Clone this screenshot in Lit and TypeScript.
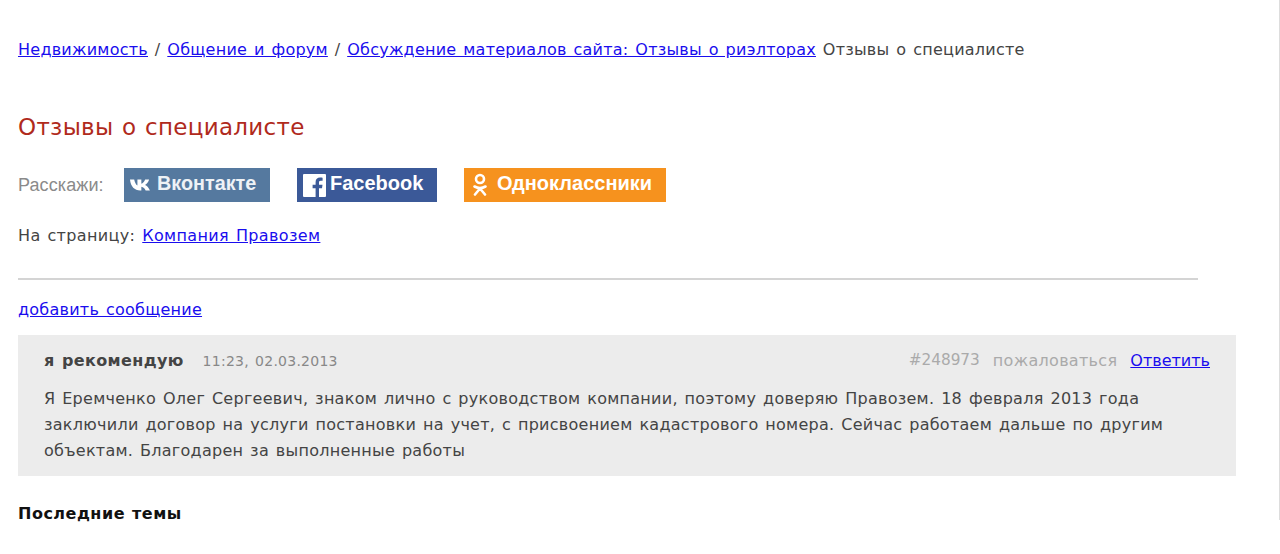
import { LitElement, html, css } from 'lit';
import { customElement } from 'lit/decorators.js';

@customElement('app-root')
export class AppRoot extends LitElement {
  static styles = css`
    :host {
      display: block;
      height: 554px;
      background: #fff;
      font-family: 'DejaVu Sans', Verdana, sans-serif;
      font-size: 16px;
      letter-spacing: 0.25px;
      word-spacing: 1.5px;
      color: #444;
      overflow: hidden;
    }
    .page {
      height: 520px;
      box-sizing: border-box;
      padding: 39px 0 0 18px;
      border-right: 1px solid #ddd;
    }
    a {
      color: #1a0dee;
      text-decoration: underline;
    }
    .crumbs {
      line-height: 21px;
      white-space: nowrap;
    }
    h1 {
      margin: 49px 0 0;
      font-size: 23px;
      line-height: 36px;
      font-weight: normal;
      letter-spacing: 0.3px;
      word-spacing: 1px;
      color: #b02a1c;
    }
    .share {
      display: flex;
      align-items: center;
      margin-top: 23px;
      height: 34px;
      letter-spacing: 0;
      word-spacing: 0;
    }
    .share-label {
      font-family: 'Liberation Sans', Arial, sans-serif;
      color: #8a8a8a;
      font-size: 18px;
      letter-spacing: 0.1px;
      width: 106px;
    }
    .btn {
      display: flex;
      align-items: center;
      height: 34px;
      box-sizing: border-box;
      margin-right: 27px;
      font-family: 'Liberation Sans', Arial, sans-serif;
      font-weight: bold;
      font-size: 20px;
      color: #fff;
      white-space: nowrap;
    }
    .btn span {
      margin-bottom: 4px;
    }
    .vk {
      width: 146px;
      background: #55799f;
      padding-left: 6px;
      gap: 5px;
      font-size: 19.8px;
      color: #eef2f6;
    }
    .fb {
      width: 140px;
      background: #3b5998;
      padding-left: 6px;
      gap: 4px;
    }
    .ok {
      width: 202px;
      background: #f6921e;
      padding-left: 9px;
      gap: 10px;
    }
    .page-link {
      margin-top: 23px;
      line-height: 21px;
      letter-spacing: 0.35px;
    }
    hr {
      width: 1180px;
      margin: 32px 0 0;
      border: 0;
      border-top: 2px solid #d4d4d4;
    }
    .add {
      margin-top: 19px;
      line-height: 21px;
    }
    .post {
      width: 1218px;
      height: 141px;
      box-sizing: border-box;
      margin-top: 15px;
      padding: 15px 26px 0;
      background: #ececec;
    }
    .post-head {
      display: flex;
      align-items: center;
      height: 21px;
    }
    .author {
      font-weight: bold;
      letter-spacing: 0.35px;
      margin-right: 19px;
    }
    .date {
      font-size: 14px;
      color: #888;
    }
    .meta {
      margin-left: auto;
      display: flex;
      gap: 13px;
      color: #aaa;
      letter-spacing: 0;
    }
    .num {
      font-size: 15.3px;
    }
    .complain {
      letter-spacing: 0.3px;
    }
    .post-body {
      margin: 15px 0 0;
      line-height: 26px;
      width: 1130px;
      letter-spacing: 0.27px;
    }
    h2 {
      margin: 27px 0 0;
      font-size: 16px;
      line-height: 21px;
      letter-spacing: 0.5px;
      word-spacing: 1px;
      color: #111;
    }
  `;

  render() {
    return html`
      <div class="page">
        <div class="crumbs">
          <a href="#">Недвижимость</a> / <a href="#">Общение и форум</a> /
          <a href="#">Обсуждение материалов сайта: Отзывы о риэлторах</a>
          Отзывы о специалисте
        </div>
        <h1>Отзывы о специалисте</h1>
        <div class="share">
          <span class="share-label">Расскажи:</span>
          <div class="btn vk">
            <svg width="22" height="12" viewBox="1 1 19 12" preserveAspectRatio="none">
              <path
                fill="#fff"
                d="M1 1.5h3.6c.5 3 1.6 5.300 2.800 6V1.500h3.400v4.200c1.300-.4 2.600-2.200 3.300-4.200h3.400c-.5 2.500-2 4.500-3.500 5.400 1.700.9 3.300 2.700 4.200 5.600h-3.700c-.7-2-2-3.400-3.700-3.700v3.700h-1C5 12.500 1.500 8.500 1 1.500z"
              />
            </svg>
            <span>Вконтакте</span>
          </div>
          <div class="btn fb">
            <svg width="23" height="23" viewBox="0 0 23 23">
              <rect width="23" height="23" rx="1" fill="#fff" />
              <path
                fill="#3b5998"
                d="M16 23v-8.800h3l.5-3.500H16V8.500c0-1 .3-1.700 1.800-1.700h1.800V3.700c-.4 0-1.400-.2-2.600-.2-2.600 0-4.400 1.600-4.400 4.500v2.700h-3v3.500h3V23z"
              />
            </svg>
            <span>Facebook</span>
          </div>
          <div class="btn ok">
            <svg width="14" height="24" viewBox="0 0 14 24">
              <circle cx="7" cy="6" r="4" fill="none" stroke="#fff" stroke-width="2.600" />
              <path
                fill="none"
                stroke="#fff"
                stroke-width="2.600"
                stroke-linecap="round"
                d="M1.500 13.500c3.500 2 7.500 2 11 0M7 15.500 2 21.500M7 15.500l5 6"
              />
            </svg>
            <span>Одноклассники</span>
          </div>
        </div>
        <div class="page-link">На страницу: <a href="#">Компания Правозем</a></div>
        <hr />
        <div class="add"><a href="#">добавить сообщение</a></div>
        <div class="post">
          <div class="post-head">
            <span class="author">я рекомендую</span>
            <span class="date">11:23, 02.03.2013</span>
            <span class="meta">
              <span class="num">#248973</span>
              <span class="complain">пожаловаться</span>
              <a href="#">Ответить</a>
            </span>
          </div>
          <p class="post-body">
            Я Еремченко Олег Сергеевич, знаком лично с руководством компании, поэтому доверяю
            Правозем. 18 февраля 2013 года заключили договор на услуги постановки на учет, с
            присвоением кадастрового номера. Сейчас работаем дальше по другим объектам. Благодарен
            за выполненные работы
          </p>
        </div>
        <h2>Последние темы</h2>
      </div>
    `;
  }
}
